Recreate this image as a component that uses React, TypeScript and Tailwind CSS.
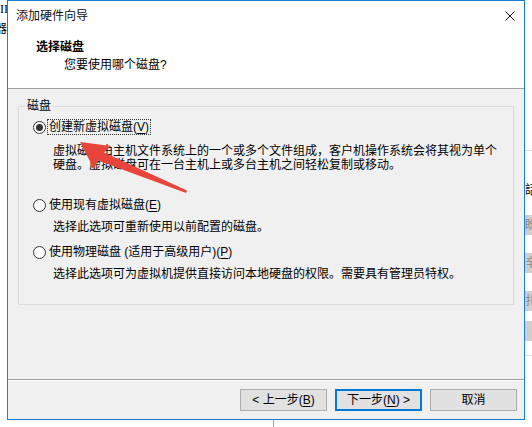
import React from "react";

const FONT = { fontFamily: '"Liberation Sans", "Noto Sans CJK SC", sans-serif' };

function Radio({ checked }: { checked?: boolean }) {
  return (
    <span className="flex h-[13px] w-[13px] shrink-0 items-center justify-center rounded-full border border-[#333333] bg-white">
      {checked && <span className="h-[7px] w-[7px] rounded-full bg-[#333333]" />}
    </span>
  );
}

function U({ c }: { c: string }) {
  return <span className="underline underline-offset-[2px]">{c}</span>;
}

export default function App() {
  return (
    <div className="relative h-[427px] w-[532px] overflow-hidden bg-white text-[12px] text-black" style={FONT}>
      {/* background desktop fragments */}
      <div className="absolute left-[-5px] top-[2px] flex flex-col text-[12px] leading-[14px]" style={{ fontFamily: '"Liberation Serif", "Noto Sans CJK SC", serif' }}>
        <span className="pl-[5px]">II</span>
        <span className="mt-[6px]">器</span>
      </div>
      <div className="absolute left-[525px] top-[150px] flex w-[12px] flex-col">
        <div className="h-px bg-[#e0e0e0]" />
        <div className="mt-[32px] text-[12px] leading-[14px]">話</div>
        <div className="mt-[18px] h-[20px] bg-[#cfcfcf] text-[12px] leading-[20px] text-[#8a8a8a]">盼</div>
        <div className="mt-[18px] h-[20px] bg-[#cfcfcf] text-[12px] leading-[20px] text-[#8a8a8a]">辛</div>
        <div className="mt-[18px] h-[20px] bg-[#cfcfcf] text-[12px] leading-[20px] text-[#8a8a8a]">扎</div>
        <div className="mt-[10px] h-[20px] bg-[#cfcfcf]" />
        <div className="mt-[14px] h-px bg-[#e0e0e0]" />
      </div>
      <div className="absolute left-[273px] top-[420px] h-[7px] w-px bg-[#a0a0a0]" />

      {/* dialog window */}
      <div className="absolute left-[7px] top-0 flex h-[420px] w-[518px] flex-col border border-[#1a7fd4] bg-[#f0f0f0]">
        {/* title bar */}
        <div className="flex h-[29px] items-center justify-between bg-white pl-[8px] pr-[9px]">
          <span className="text-[12px] leading-[14px] text-[#111]">添加硬件向导</span>
          <svg width="10" height="10" viewBox="0 0 10 10" className="mt-[1px]">
            <path d="M0.5 0.5 L9.5 9.5 M9.5 0.5 L0.5 9.5" stroke="#111" strokeWidth="1" />
          </svg>
        </div>
        {/* header */}
        <div className="flex h-[58px] flex-col bg-white pt-[9px]">
          <div className="pl-[28px] text-[12px] font-bold leading-[16px]">选择磁盘</div>
          <div className="mt-[2px] pl-[56px] text-[12px] leading-[16px]">您要使用哪个磁盘?</div>
        </div>
        <div className="h-px bg-[#a0a0a0]" />
        {/* content */}
        <div className="flex-1 px-[10px] pt-[10px]">
          <fieldset className="border border-[#dcdcdc] pb-[23px]">
            <legend className="ml-[7px] px-[1px] text-[12px] leading-[14px]">磁盘</legend>
            <div className="pl-[14px]">
              <div className="mt-[6px] flex h-[16px] items-center">
                <Radio checked />
                <span className="ml-[1px] border border-dotted border-[#333] px-[1px] leading-[14px]">
                  创建新虚拟磁盘(<U c="V" />)
                </span>
              </div>
              <div className="mt-[9px] pl-[20px] leading-[14px]">
                <div>虚拟磁盘由主机文件系统上的一个或多个文件组成，客户机操作系统会将其视为单个</div>
                <div>硬盘。虚拟磁盘可在一台主机上或多台主机之间轻松复制或移动。</div>
              </div>
              <div className="mt-[25px] flex h-[16px] items-center">
                <Radio />
                <span className="ml-[3px] leading-[14px]">
                  使用现有虚拟磁盘(<U c="E" />)
                </span>
              </div>
              <div className="mt-[7px] pl-[20px] leading-[14px]">选择此选项可重新使用以前配置的磁盘。</div>
              <div className="mt-[10px] flex h-[16px] items-center">
                <Radio />
                <span className="ml-[3px] leading-[14px]">
                  使用物理磁盘 (适用于高级用户)(<U c="P" />)
                </span>
              </div>
              <div className="mt-[7px] pl-[20px] leading-[14px]">选择此选项可为虚拟机提供直接访问本地硬盘的权限。需要具有管理员特权。</div>
            </div>
          </fieldset>
        </div>
        <div className="h-px bg-[#a0a0a0]" />
        <div className="h-px bg-white" />
        {/* footer */}
        <div className="flex h-[38px] items-center justify-end gap-[8px] pr-[7px]">
          <button className="flex h-[22px] w-[87px] items-center justify-center border border-[#adadad] bg-[#e1e1e1] leading-[14px]">
            &lt; 上一步(<U c="B" />)
          </button>
          <button className="flex h-[22px] w-[87px] items-center justify-center border-2 border-[#0078d7] bg-[#e1e1e1] leading-[14px]">
            下一步(<U c="N" />) &gt;
          </button>
          <button className="flex h-[22px] w-[87px] items-center justify-center border border-[#adadad] bg-[#e1e1e1] leading-[14px]">
            取消
          </button>
        </div>
      </div>

      {/* red annotation arrow */}
      <svg className="pointer-events-none absolute left-0 top-0" width="532" height="427" viewBox="0 0 532 427">
        <polygon
          points="80,142 111,146 104,152.5 187,190.5 186,193 98,160.5 94,169"
          fill="#e9443b"
        />
      </svg>
    </div>
  );
}
